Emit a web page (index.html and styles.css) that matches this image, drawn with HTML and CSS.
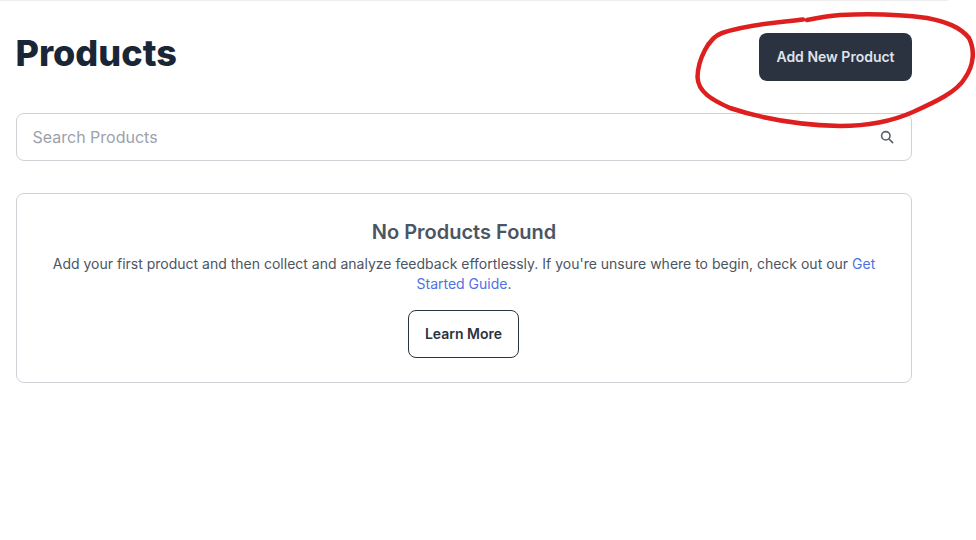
FILE: index.html
```html
<!DOCTYPE html>
<html lang="en">
<head>
    <meta charset="UTF-8">
    <title>Products</title>
    <link rel="stylesheet" href="styles.css">
</head>
<body>
    <div class="topline"></div>
    <div class="container">
        <div class="header">
            <h1>Products</h1>
            <button class="btn-primary">Add New Product</button>
        </div>

        <div class="search">
            <span class="search-text">Search Products</span>
            <svg class="search-icon" width="14" height="14" viewBox="0 0 14 14" fill="none" stroke="#5b6169" stroke-width="1.6">
                <circle cx="5.8" cy="5.8" r="4.2"/>
                <path d="M9 9l3.6 3.6" stroke-linecap="round"/>
            </svg>
        </div>

        <div class="empty">
            <h2>No Products Found</h2>
            <p>Add your first product and then collect and analyze feedback effortlessly. If you're unsure where to begin, check out our <a href="#">Get Started Guide</a>.</p>
            <button class="btn-outline">Learn More</button>
        </div>
    </div>

    <!-- red marker drawn over the screenshot -->
    <svg class="marker" width="976" height="140" viewBox="0 0 976 140" fill="none" stroke="#dd1f1f" stroke-width="4.5" stroke-linecap="round" stroke-linejoin="round">
        <path d="M803 19.5C785 22 752 23 722 33C708 38 698 60 697.500 77C698 92 712 100 730 108C760 118 800 125 840 126C870 126 895 120 913 112C935 102 957 92 965 78C974 65 975 50 969 38C960 27 947 22 927 18C897 14 860 14 840 15C828 16 817 18 807 20"/>
    </svg>
</body>
</html>
```

FILE: styles.css
```css
* {
    box-sizing: border-box;
}
body {
    margin: 0;
    background: #fff;
    font-family: Inter, "Liberation Sans", sans-serif;
    overflow: hidden;
}
.topline {
    width: 948px;
    height: 1px;
    background: #eeeeef;
}
.container {
    width: 912px;
    padding: 32px 0 0 16px;
}
.header {
    display: flex;
    justify-content: space-between;
    align-items: center;
    height: 48px;
}
h1 {
    margin: 0;
    font-size: 36px;
    line-height: 40px;
    font-weight: 800;
    color: #1a2636;
    position: relative;
    top: -4px;
    left: -0.5px;
}
.btn-primary {
    width: 153px;
    height: 48px;
    padding: 0 0 2px;
    background: #2b3240;
    color: #dfe3ec;
    border: none;
    border-radius: 8px;
    font-family: inherit;
    font-size: 14px;
    font-weight: 600;
}
.search {
    display: flex;
    justify-content: space-between;
    align-items: center;
    height: 48px;
    margin-top: 32px;
    padding: 0 17px 0 15.5px;
    border: 1px solid #d0d1d6;
    border-radius: 8px;
}
.search-text {
    font-size: 16px;
    color: #9ca1ac;
}
.empty {
    margin-top: 32px;
    height: 190px;
    padding: 24px 32px 0;
    border: 1px solid #d0d1d6;
    border-radius: 8px;
    text-align: center;
}
h2 {
    margin: 0;
    font-size: 20px;
    line-height: 28px;
    font-weight: 600;
    color: #4b5563;
}
p {
    margin: 8px 0 16px;
    font-size: 14px;
    line-height: 20px;
    color: #4b5563;
}
a {
    color: #4f72e3;
    text-decoration: none;
}
.btn-outline {
    width: 111px;
    height: 48px;
    margin-right: 1px;
    padding: 0 0 2px;
    background: #fff;
    color: #2b3240;
    border: 1px solid #2b3240;
    border-radius: 8px;
    font-family: inherit;
    font-size: 14px;
    font-weight: 600;
}
.marker {
    position: absolute;
    top: 0;
    left: 0;
}
```
